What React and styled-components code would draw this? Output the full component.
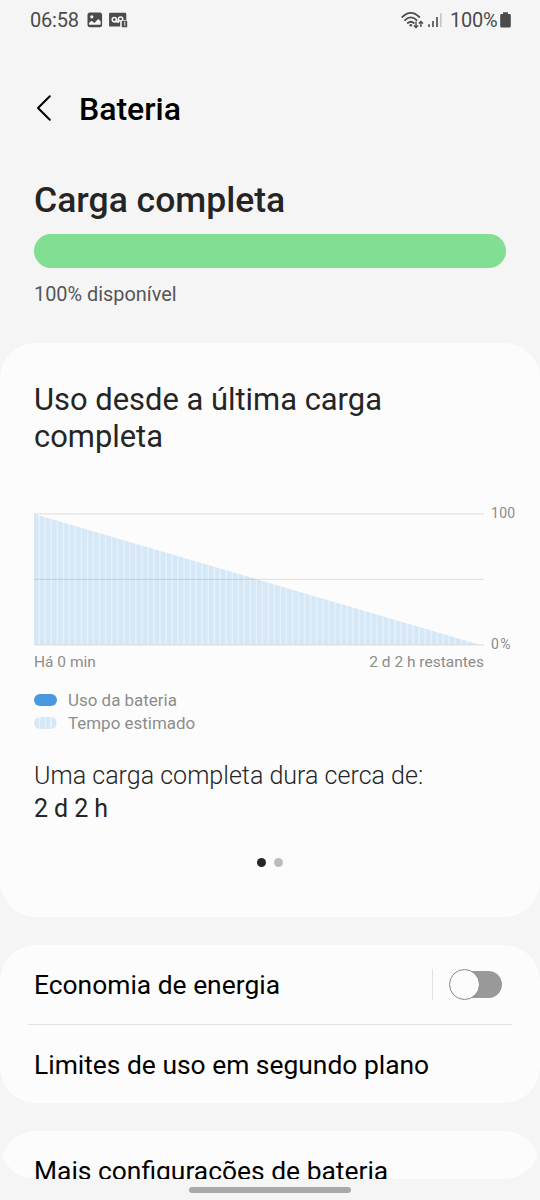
import { useState } from "react";
import styled, { createGlobalStyle } from "styled-components";

const GlobalStyle = createGlobalStyle`
  * {
    box-sizing: border-box;
  }
  body {
    margin: 0;
    background: #f5f5f5;
    font-family: Roboto, "Liberation Sans", sans-serif;
    color: #252525;
  }
  h1, h2, p {
    margin: 0;
  }
`;

const StatusBar = () => {
  return (
    <StatusRow>
      <Clock>06:58</Clock>
      <PictureIcon width="16" height="16" viewBox="0 0 16 16">
        <rect x="0.5" y="0.5" width="14.6" height="14.8" rx="2.5" fill="#4b4b4b" />
        <circle cx="4.8" cy="4.8" r="1.6" fill="#f5f5f5" />
        <path d="M2 12.8V11L4.6 8.8L7.4 11L11.2 7L13.6 9.2V12.8Z" fill="#f5f5f5" />
      </PictureIcon>
      <svg width="19" height="16" viewBox="0 0 19 16">
        <rect x="0.1" y="0.8" width="17.2" height="13.8" rx="1.2" fill="#4b4b4b" />
        <g fill="none" stroke="#f5f5f5" strokeWidth="1.5">
          <circle cx="5.3" cy="7.6" r="2.1" />
          <circle cx="11.6" cy="7" r="2.1" />
          <path d="M5.3 9.7H9.6M9.2 6.8V11" />
        </g>
        <path d="M11.2 16V10.2Q11.2 8 13.4 8H19V16Z" fill="#f5f5f5" />
        <rect x="12.8" y="8.8" width="5.4" height="6.5" rx="0.6" fill="#4b4b4b" />
        <path d="M14.8 10.8L15.8 10V14" fill="none" stroke="#f5f5f5" strokeWidth="0.9" />
      </svg>
      <Spacer />
      <svg width="24" height="18" viewBox="0 0 24 18">
        <g fill="none" stroke="#4b4b4b" strokeWidth="1.8" strokeLinecap="round">
          <path d="M1.3 6Q9.8 -2.2 18.3 6" />
          <path d="M4 9.2Q9.8 3.6 15.6 9.2" />
          <path d="M6.8 12Q9.8 9.4 12.8 12" />
        </g>
        <circle cx="9.8" cy="14.2" r="1.3" fill="#4b4b4b" />
        <g fill="none" stroke="#4b4b4b" strokeWidth="1.4">
          <path d="M15 10.5V16.4M12.9 14.4L15 16.6L17.1 14.4" />
          <path d="M19.9 16V10.6M17.8 12.6L19.9 10.4L22 12.6" />
        </g>
      </svg>
      <SignalIcon width="14" height="16" viewBox="0 0 14 16">
        <path d="M1 15V12.3M5 15V9M9 15V5" stroke="#4b4b4b" strokeWidth="1.6" />
        <path d="M12.8 15V1.2" stroke="#c4c4c4" strokeWidth="1.6" />
      </SignalIcon>
      <Percent>100%</Percent>
      <svg width="11" height="16" viewBox="0 0 11 16">
        <path d="M3 0.3H8V2H9.4Q10.8 2 10.8 3.4V14.2Q10.8 15.6 9.4 15.6H1.6Q0.2 15.6 0.2 14.2V3.4Q0.2 2 1.6 2H3Z" fill="#4b4b4b" />
      </svg>
    </StatusRow>
  );
};

const UsageChart = () => {
  return (
    <ChartGrid>
      <svg width="450" height="133" viewBox="0 0 450 133">
        <defs>
          <pattern id="stripes" width="6.03" height="133" patternUnits="userSpaceOnUse">
            <rect width="6.03" height="133" fill="#e5f2fd" />
            <rect width="4.6" height="133" fill="#d6e7f5" />
          </pattern>
        </defs>
        <path d="M0 1L445 131.5H0Z" fill="url(#stripes)" />
        <path d="M0 0.8H450M0 66.3H450M0 131.8H450" stroke="#000" strokeOpacity="0.1" strokeWidth="1.3" />
      </svg>
      <Scale>
        <span>100</span>
        <ScaleMin>0%</ScaleMin>
      </Scale>
      <TimeAxis>
        <span>Há 0 min</span>
        <span>2 d 2 h restantes</span>
      </TimeAxis>
    </ChartGrid>
  );
};

const App = () => {
  const [saving, setSaving] = useState(false);

  return (
    <Screen>
      <GlobalStyle />
      <Content>
        <StatusBar />
        <Header>
          <svg width="16" height="28" viewBox="0 0 16 28">
            <path d="M13.8 2.2L2 14L13.8 25.8" fill="none" stroke="#000" strokeWidth="2" strokeLinecap="round" strokeLinejoin="round" />
          </svg>
          <Title>Bateria</Title>
        </Header>
        <Charge>
          <ChargeTitle>Carga completa</ChargeTitle>
          <ChargeBar />
          <Available>100% disponível</Available>
        </Charge>

        <UsageCard>
          <UsageTitle>Uso desde a última carga completa</UsageTitle>
          <UsageChart />
          <Legend>
            <LegendItem>
              <Swatch />
              Uso da bateria
            </LegendItem>
            <LegendItem>
              <Swatch $striped />
              Tempo estimado
            </LegendItem>
          </Legend>
          <Duration>Uma carga completa dura cerca de:</Duration>
          <DurationValue>2 d 2 h</DurationValue>
          <Dots>
            <Dot $active />
            <Dot />
          </Dots>
        </UsageCard>

        <OptionsCard>
          <Option>
            <OptionLabel>Economia de energia</OptionLabel>
            <Divider />
            <Toggle role="switch" aria-checked={saving} onClick={() => setSaving(!saving)}>
              <Track />
              <Knob $on={saving} />
            </Toggle>
          </Option>
          <Line />
          <Option>
            <OptionLabel>Limites de uso em segundo plano</OptionLabel>
          </Option>
        </OptionsCard>

        <MoreCard>
          <Option>
            <OptionLabel>Mais configurações de bateria</OptionLabel>
          </Option>
        </MoreCard>
      </Content>
      <HomeBar />
    </Screen>
  );
};

export default App;

const Screen = styled.div`
  width: 540px;
  height: 1200px;
  overflow: hidden;
  background: #f5f5f5;
  display: flex;
  flex-direction: column;
  align-items: center;
`;

const Content = styled.div`
  width: 100%;
  height: 1179px;
  flex-shrink: 0;
  overflow: hidden;
  border-radius: 0 0 36px 36px;
`;

const StatusRow = styled.div`
  height: 40px;
  padding: 0 29px 0 30px;
  display: flex;
  align-items: center;
  color: #4b4b4b;
  font-size: 20px;
`;

const Clock = styled.span`
  width: 57px;
  letter-spacing: -0.2px;
`;

const PictureIcon = styled.svg`
  margin-right: 6px;
`;

const SignalIcon = styled.svg`
  margin: 0 8px 0 3px;
`;

const Percent = styled.span`
  width: 50px;
  letter-spacing: -0.2px;
`;

const Spacer = styled.div`
  flex: 1;
`;

const Header = styled.div`
  height: 136px;
  padding: 0 36px;
  display: flex;
  align-items: center;
  gap: 27px;
`;

const Title = styled.h1`
  margin-top: 2px;
  font-size: 32px;
  font-weight: 500;
  line-height: 36px;
  color: #000;
`;

const Charge = styled.div`
  height: 167px;
  padding: 3px 34px 0;
`;

const ChargeTitle = styled.h2`
  font-size: 35.5px;
  font-weight: 500;
  line-height: 42px;
`;

const ChargeBar = styled.div`
  height: 34px;
  margin-top: 13px;
  border-radius: 17px;
  background: #82de92;
`;

const Available = styled.p`
  margin-top: 15px;
  font-size: 19.9px;
  line-height: 24px;
  color: #555;
`;

const Card = styled.section`
  background: #fcfcfc;
  border-radius: 36px;
`;

const UsageCard = styled(Card)`
  height: 574px;
  padding: 38px 34px 0;
`;

const UsageTitle = styled.h2`
  width: 400px;
  font-size: 30.9px;
  font-weight: 400;
  line-height: 37px;
`;

const ChartGrid = styled.div`
  margin-top: 58px;
  display: grid;
  grid-template-columns: 450px 1fr;
  grid-template-rows: 133px 20px;
  column-gap: 7px;
  row-gap: 6px;
`;

const Scale = styled.div`
  height: 147px;
  margin: -8px -12px 0 0;
  display: flex;
  flex-direction: column;
  justify-content: space-between;
  font-size: 14px;
  line-height: 16px;
  letter-spacing: 0.3px;
  color: #8a8a8a;
`;

const ScaleMin = styled.span`
  letter-spacing: 1.4px;
`;

const TimeAxis = styled.div`
  display: flex;
  justify-content: space-between;
  font-size: 15.5px;
  line-height: 20px;
  color: #8c8c8c;
`;

const Legend = styled.div`
  margin-top: 17px;
`;

const LegendItem = styled.div`
  height: 23px;
  display: flex;
  align-items: center;
  gap: 11px;
  font-size: 16.95px;
  line-height: 23px;
  color: #8c8c8c;
`;

const Swatch = styled.span`
  width: 23px;
  height: 12px;
  margin-bottom: 1px;
  border-radius: 6px;
  background: ${(props) => (props.$striped ? "repeating-linear-gradient(90deg, #d6e7f5 0 4.5px, #e5f2fd 4.5px 6px)" : "#4a98e0")};
`;

const Duration = styled.p`
  margin-top: 24px;
  font-size: 25.05px;
  font-weight: 300;
  line-height: 33px;
`;

const DurationValue = styled.p`
  font-size: 25px;
  line-height: 33px;
  letter-spacing: -0.1px;
`;

const Dots = styled.div`
  margin-top: 33px;
  display: flex;
  justify-content: center;
  gap: 8px;
`;

const Dot = styled.span`
  width: 9px;
  height: 9px;
  border-radius: 50%;
  background: ${(props) => (props.$active ? "#252525" : "#bcbcbc")};
`;

const OptionsCard = styled(Card)`
  margin-top: 28px;
  height: 158px;
`;

const MoreCard = styled(Card)`
  margin-top: 28px;
  height: 80px;
`;

const Option = styled.div`
  height: 79px;
  padding: 0 38px 0 34px;
  display: flex;
  align-items: center;
`;

const OptionLabel = styled.span`
  flex: 1;
  padding-top: 1px;
  font-size: 26.4px;
  line-height: 32px;
  white-space: nowrap;
  color: #000;
`;

const Divider = styled.div`
  width: 1px;
  height: 31px;
  margin-right: 16px;
  background: #e2e2e2;
`;

const Toggle = styled.button`
  position: relative;
  width: 53px;
  height: 31px;
  padding: 0;
  border: 0;
  background: none;
  display: flex;
  align-items: center;
  justify-content: flex-end;
`;

const Track = styled.span`
  width: 48px;
  height: 27px;
  border-radius: 14px;
  background: #999;
`;

const Knob = styled.span`
  position: absolute;
  top: 0;
  left: ${(props) => (props.$on ? "22px" : "0")};
  width: 31px;
  height: 31px;
  border: 1.5px solid #888;
  border-radius: 50%;
  background: #fcfcfc;
`;

const Line = styled.div`
  height: 1px;
  margin: 0 28px;
  background: #e2e2e2;
`;

const HomeBar = styled.div`
  width: 162px;
  height: 6px;
  margin-top: 8px;
  border-radius: 3px;
  background: #a9a9a9;
`;
